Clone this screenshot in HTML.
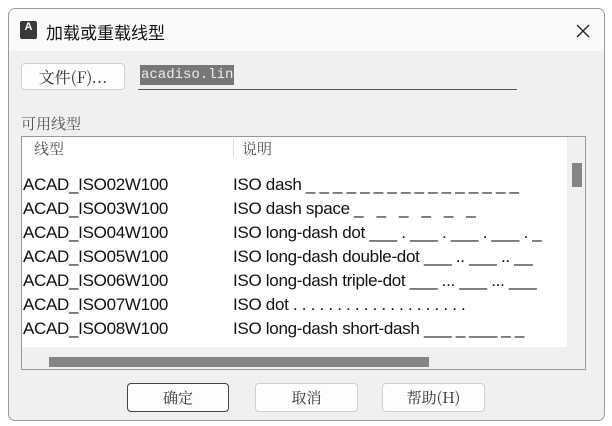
<!DOCTYPE html>
<html><head><meta charset="utf-8"><style>
*{margin:0;padding:0;box-sizing:border-box}
body{width:612px;height:426px;background:#fff;font-family:"Liberation Sans","Noto Sans CJK SC",sans-serif;position:relative;overflow:hidden;color:#1a1a1a}
.dlg{position:absolute;left:8px;top:8px;width:597px;height:413px;background:#f0f0f0;border:1px solid #9a9a9a;border-radius:7px;overflow:hidden}
.title{position:absolute;left:0;top:0;width:100%;height:42px;background:#fafafa}
.abs{position:absolute}
.btn{position:absolute;background:#fdfdfd;border:1px solid #d0d0d0;border-radius:4px;font-family:"Noto Serif CJK SC",serif;font-size:15px;color:#333;text-align:center}
.row{position:absolute;left:1px;height:24px;font-size:17px;line-height:24px;white-space:nowrap;color:#111;letter-spacing:-0.3px}
</style></head><body>
<div class="dlg">
<div class="title"></div>
<div class="abs" style="left:11px;top:12px;width:17px;height:18px;background:#3a3a3a;border-radius:2px;color:#fff;font-size:11px;font-weight:bold;text-align:center;line-height:12px">A</div>
<div class="abs" style="left:37px;top:10px;font-size:17px;color:#111">加载或重载线型</div>
<svg class="abs" style="left:567px;top:15px" width="14" height="14"><path d="M1 1L13 13M13 1L1 13" stroke="#222" stroke-width="1.3"/></svg>
<div class="btn" style="left:12px;top:54px;width:104px;height:27px;line-height:25px;font-size:16px">文件(F)...</div>
<div class="abs" style="left:129px;top:54px;width:379px;height:27px;border-bottom:1px solid #555;background:#f0f0f0"></div>
<div class="abs" style="left:131px;top:56px;height:20px;background:#777;color:#eee;font-family:'Liberation Mono',monospace;font-size:14px;line-height:20px;padding:0 1px">acadiso.lin</div>
<div class="abs" style="left:12px;top:104px;font-size:15px;color:#555;font-family:'Noto Serif CJK SC',serif">可用线型</div>
<div class="abs" style="left:12px;top:127px;width:565px;height:234px;border:1px solid #999;background:#f0f0f0">
 <div class="abs" style="left:0;top:0;width:545px;height:210px;background:#fff"></div>
 <div class="abs" style="left:12px;top:1px;font-size:15px;color:#555;font-family:'Noto Serif CJK SC',serif">线型</div>
 <div class="abs" style="left:211px;top:2px;width:1px;height:18px;background:#ddd"></div>
 <div class="abs" style="left:220px;top:1px;font-size:15px;color:#555;font-family:'Noto Serif CJK SC',serif">说明</div>
 <div class="row" style="top:36px">ACAD_ISO02W100</div><div class="row" style="left:211px;top:36px;width:334px;overflow:hidden">ISO dash _ _ _ _ _ _ _ _ _ _ _ _ _ _ _ _</div>
 <div class="row" style="top:60px">ACAD_ISO03W100</div><div class="row" style="left:211px;top:60px">ISO dash space _&nbsp;&nbsp;&nbsp;_&nbsp;&nbsp;&nbsp;_&nbsp;&nbsp;&nbsp;_&nbsp;&nbsp;&nbsp;_&nbsp;&nbsp;&nbsp;_</div>
 <div class="row" style="left:211px;top:84px;width:334px;overflow:hidden">ISO long-dash dot ___ . ___ . ___ . ___ . _</div><div class="row" style="top:84px">ACAD_ISO04W100</div>
 <div class="row" style="top:108px">ACAD_ISO05W100</div><div class="row" style="left:211px;top:108px;width:334px;overflow:hidden">ISO long-dash double-dot ___ .. ___ .. __</div>
 <div class="row" style="top:132px">ACAD_ISO06W100</div><div class="row" style="left:211px;top:132px;width:334px;overflow:hidden">ISO long-dash triple-dot ___ ... ___ ... ___</div>
 <div class="row" style="top:156px">ACAD_ISO07W100</div><div class="row" style="left:211px;top:156px">ISO dot . . . . . . . . . . . . . . . . . . . .</div>
 <div class="row" style="top:180px">ACAD_ISO08W100</div><div class="row" style="left:211px;top:180px;width:334px;overflow:hidden">ISO long-dash short-dash ___ _ ___ _ _</div>
 <div class="abs" style="left:550px;top:26px;width:10px;height:24px;background:#858585"></div>
 <div class="abs" style="left:27px;top:220px;width:380px;height:10px;background:#858585"></div>
</div>
<div class="btn" style="left:118px;top:374px;width:102px;height:29px;line-height:27px;border:1px solid #444">确定</div>
<div class="btn" style="left:246px;top:374px;width:103px;height:29px;line-height:27px">取消</div>
<div class="btn" style="left:373px;top:374px;width:103px;height:29px;line-height:27px">帮助(H)</div>
</div>
</body></html>
